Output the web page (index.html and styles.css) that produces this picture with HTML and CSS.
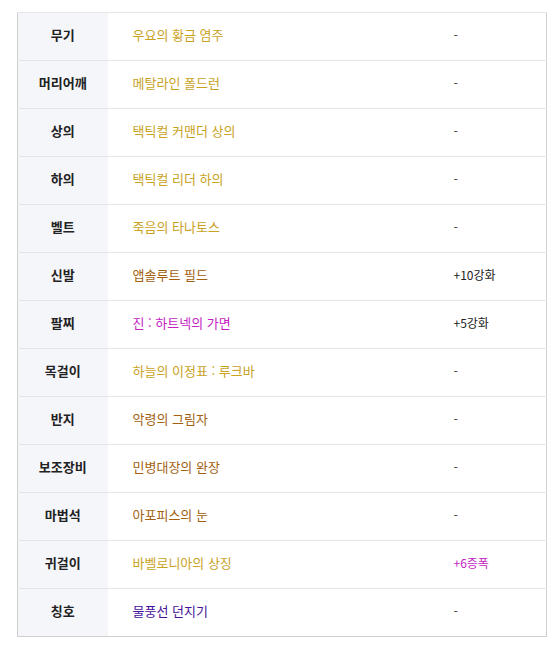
FILE: index.html
```html
<!DOCTYPE html>
<html lang="ko">
    <head>
        <meta charset="UTF-8" />
        <meta name="viewport" content="width=device-width, initial-scale=1.0" />
        <title>장비 목록</title>
        <link rel="stylesheet" href="styles.css">
    </head>
    <body>
        <main>
            <table class="equip">
                <colgroup>
                    <col class="col-slot" />
                    <col class="col-item" />
                    <col class="col-extra" />
                </colgroup>
                <tbody>
                    <tr>
                        <th>무기</th>
                        <td class="gold">우요의 황금 염주</td>
                        <td class="extra none">-</td>
                    </tr>
                    <tr>
                        <th>머리어깨</th>
                        <td class="gold">메탈라인 폴드런</td>
                        <td class="extra none">-</td>
                    </tr>
                    <tr>
                        <th>상의</th>
                        <td class="gold">택틱컬 커맨더 상의</td>
                        <td class="extra none">-</td>
                    </tr>
                    <tr>
                        <th>하의</th>
                        <td class="gold">택틱컬 리더 하의</td>
                        <td class="extra none">-</td>
                    </tr>
                    <tr>
                        <th>벨트</th>
                        <td class="gold">죽음의 타나토스</td>
                        <td class="extra none">-</td>
                    </tr>
                    <tr>
                        <th>신발</th>
                        <td class="brown">앱솔루트 필드</td>
                        <td class="extra">+10강화</td>
                    </tr>
                    <tr>
                        <th>팔찌</th>
                        <td class="pink">진 : 하트넥의 가면</td>
                        <td class="extra">+5강화</td>
                    </tr>
                    <tr>
                        <th>목걸이</th>
                        <td class="gold">하늘의 이정표 : 루크바</td>
                        <td class="extra none">-</td>
                    </tr>
                    <tr>
                        <th>반지</th>
                        <td class="brown">악령의 그림자</td>
                        <td class="extra none">-</td>
                    </tr>
                    <tr>
                        <th>보조장비</th>
                        <td class="brown">민병대장의 완장</td>
                        <td class="extra none">-</td>
                    </tr>
                    <tr>
                        <th>마법석</th>
                        <td class="brown">아포피스의 눈</td>
                        <td class="extra none">-</td>
                    </tr>
                    <tr>
                        <th>귀걸이</th>
                        <td class="gold">바벨로니아의 상징</td>
                        <td class="extra pink">+6증폭</td>
                    </tr>
                    <tr>
                        <th>칭호</th>
                        <td class="purple">물풍선 던지기</td>
                        <td class="extra none">-</td>
                    </tr>
                </tbody>
            </table>
        </main>
    </body>
</html>
```

FILE: styles.css
```css
* {
    margin: 0;
}

body {
    margin: 0;
    background: #fff;
    font-family: 'Noto Sans CJK KR', 'Noto Sans', sans-serif;
    font-size: 13px;
    color: #222;
}

main {
    padding: 12px 0 0 17px;
}

.equip {
    width: 530px;
    border-collapse: collapse;
    border: 1px solid #cfcfcf;
    table-layout: fixed;
}

.col-slot {
    width: 90px;
}

.col-item {
    width: 321px;
}

.equip th,
.equip td {
    height: 42px;
    padding: 0 0 5px;
    border-top: 1px solid #e6e6e6;
    vertical-align: middle;
    line-height: 1;
}

.equip th {
    background: #f5f6fa;
    font-weight: 700;
    text-align: center;
    color: #222;
}

.equip td {
    padding-left: 25px;
    text-align: left;
}

.equip .extra {
    font-size: 12px;
    padding-bottom: 4px;
}

.equip .none {
    color: #555;
    font-size: 13px;
}

.gold {
    color: #c9a21e;
}

.brown {
    color: #a25f10;
}

.pink {
    color: #c41ec4;
}

.purple {
    color: #45109a;
}
```
